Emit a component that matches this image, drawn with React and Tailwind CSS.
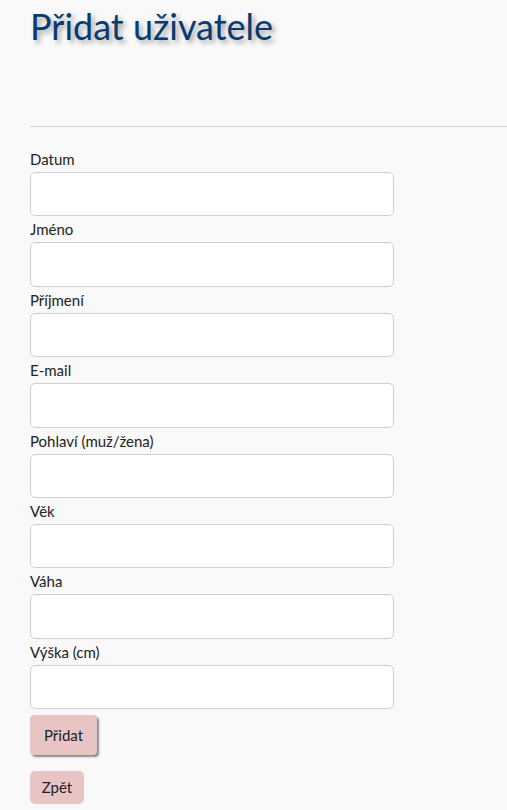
export default function App() {
  const fields = ["Datum", "Jméno", "Příjmení", "E-mail", "Pohlaví (muž/žena)", "Věk", "Váha", "Výška (cm)"];
  return (
    <div className="min-h-[810px] bg-[#f9f9f9] pl-[30px] text-[#222]" style={{ fontFamily: "Lato, 'Open Sans', sans-serif" }}>
      <h1 className="pt-[4px] text-[36px] leading-[44px] text-[#0b3a6e] [text-shadow:3px_3px_5px_rgba(0,0,0,0.35)]">Přidat uživatele</h1>
      <div className="mt-[78px] border-t border-[#cfcfcf]" />
      <form className="mt-[19px] flex flex-col">
        {fields.map((f) => (
          <div key={f} className="flex flex-col">
            <label className="text-[15px] leading-[26px]">{f}</label>
            <input className="h-[44.4px] w-[364px] rounded-[5px] border border-[#cfcfcf] bg-white" />
          </div>
        ))}
        <div className="mt-[6px]">
          <button type="button" className="h-[40px] w-[67px] rounded-[4px] bg-[#e8c4c4] text-[15px] shadow-[2px_2px_2px_rgba(0,0,0,0.45)]">Přidat</button>
        </div>
        <div className="mt-[16px]">
          <button type="button" className="h-[33px] w-[54px] rounded-[5px] bg-[#e8c4c4] text-[15px]">Zpět</button>
        </div>
      </form>
    </div>
  );
}
